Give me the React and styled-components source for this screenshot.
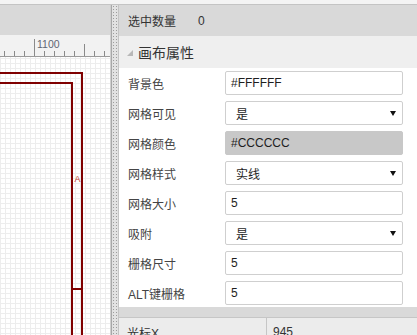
import React from "react";
import styled, { createGlobalStyle } from "styled-components";

const Global = createGlobalStyle`
  html, body { margin: 0; padding: 0; background: #fff; }
  body { font-family: "Liberation Sans", "Noto Sans CJK SC", sans-serif; }
  * { box-sizing: border-box; }
`;

const Page = styled.div`
  width: 417px;
  height: 335px;
  overflow: hidden;
  display: flex;
  flex-direction: column;
  background: #f4f4f4;
`;

const TopStrip = styled.div`
  height: 5px;
  flex: none;
  background: #f4f4f4;
  border-bottom: 1px solid #c4c4c4;
`;

const Main = styled.div`
  flex: 1;
  display: flex;
  min-height: 0;
`;

const Canvas = styled.div`
  width: 111px;
  flex: none;
  display: flex;
  flex-direction: column;
  border-right: 1px solid #cfcfcf;
`;

const CanvasBar = styled.div`
  height: 30px;
  flex: none;
  background: #d9d9d9;
`;

const Ruler = styled.div`
  height: 22px;
  flex: none;
  background: #f2f2f2;
  border-bottom: 1px solid #9a9a9a;
  svg { display: block; }
`;

const Grid = styled.div`
  flex: 1;
  background-color: #fff;
  background-image: linear-gradient(#ededed 1px, transparent 1px),
    linear-gradient(90deg, #ededed 1px, transparent 1px);
  background-size: 5px 5px;
  background-position: 0 1px;
  svg { display: block; }
`;

const Splitter = styled.div`
  width: 8px;
  flex: none;
  border-left: 1px solid #a8a8a8;
  border-right: 1px solid #c4c4c4;
  background-color: #e2e2e2;
  background-image: radial-gradient(circle at 1.5px 1.5px, #9c9c9c 0.8px, transparent 1px);
  background-size: 3px 3px;
`;

const Panel = styled.div`
  flex: 1;
  display: flex;
  flex-direction: column;
  background: #fff;
  color: #333;
  font-size: 12px;
`;

const CountRow = styled.div`
  height: 31px;
  flex: none;
  display: flex;
  align-items: center;
  padding-left: 9px;
  background: #d9d9d9;
`;

const CountLabel = styled.span`
  width: 70px;
`;

const SectionHeader = styled.div`
  height: 32px;
  flex: none;
  display: flex;
  align-items: center;
  gap: 5px;
  padding-left: 8px;
  background: #efefef;
  font-size: 14px;
  color: #333;
`;

const Corner = styled.span`
  width: 0;
  height: 0;
  margin-top: 2px;
  border-style: solid;
  border-width: 0 0 6px 6px;
  border-color: transparent transparent #b8b8b8 transparent;
`;

const Form = styled.div`
  flex: none;
  display: flex;
  flex-direction: column;
  gap: 6px;
  padding: 3px 14px 2px 9px;
`;

const Row = styled.div`
  height: 24px;
  display: flex;
  align-items: center;
`;

const Label = styled.span`
  width: 97px;
  color: #444;
`;

const Field = styled.div`
  width: 178px;
  height: 24px;
  display: flex;
  align-items: center;
  justify-content: space-between;
  padding: 0 6px 0 ${(p) => (p.$select ? 10 : 5)}px;
  border: 1px solid ${(p) => (p.$fill ? p.$fill : "#cfcfcf")};
  border-radius: 2px;
  background: ${(p) => p.$fill || "#fff"};
  color: #1e1e1e;
  font-size: 12px;
`;

const Arrow = styled.span`
  width: 0;
  height: 0;
  border-style: solid;
  border-width: 5px 3px 0 3px;
  border-color: #111 transparent transparent transparent;
`;

const Gap = styled.div`
  height: 10px;
  flex: none;
  background: #d9d9d9;
`;

const InfoRow = styled.div`
  flex: 1;
  display: flex;
  border-top: 1px solid #c6c6c6;
  background: #ececec;
`;

const InfoCell = styled.div`
  height: 28px;
  display: flex;
  align-items: center;
  padding-left: ${(p) => (p.$first ? 8 : 6)}px;
  width: ${(p) => (p.$first ? "148px" : "auto")};
  flex: ${(p) => (p.$first ? "none" : 1)};
  border-right: ${(p) => (p.$first ? "1px solid #c6c6c6" : "none")};
  color: #333;
`;

const rows = [
  { label: "背景色", value: "#FFFFFF" },
  { label: "网格可见", value: "是", select: true },
  { label: "网格颜色", value: "#CCCCCC", fill: "#c8c8c8" },
  { label: "网格样式", value: "实线", select: true },
  { label: "网格大小", value: "5" },
  { label: "吸附", value: "是", select: true },
  { label: "栅格尺寸", value: "5" },
  { label: "ALT键栅格", value: "5" },
];

function RulerDrawing() {
  const ticks = [4, 14, 24, 34, 44, 54, 64, 74, 84, 94, 104];
  return (
    <svg width="110" height="21" viewBox="0 0 110 21">
      {ticks.map((x) => {
        const top = x === 34 ? 4 : x === 84 ? 9 : 16;
        return (
          <line key={x} x1={x + 0.5} x2={x + 0.5} y1={top} y2={21} stroke="#8a8a8a" strokeWidth="1" />
        );
      })}
      <text x="37" y="12.5" fontSize="10.5" fill="#5f6673" fontFamily="Liberation Sans, sans-serif">
        1100
      </text>
    </svg>
  );
}

function CanvasDrawing() {
  const red = "#7f0000";
  return (
    <svg width="110" height="278" viewBox="0 0 110 278" shapeRendering="crispEdges">
      <polyline points="0,16 82,16 82,278" fill="none" stroke={red} strokeWidth="2" />
      <polyline points="0,26 72,26 72,278" fill="none" stroke={red} strokeWidth="2" />
      <line x1="72" x2="82" y1="232" y2="232" stroke={red} strokeWidth="2" />
      <text x="77.5" y="124.5" fontSize="9" fill="#c0392b" textAnchor="middle" fontFamily="Liberation Sans, sans-serif" shapeRendering="auto">
        A
      </text>
    </svg>
  );
}

export default function App() {
  return (
    <>
      <Global />
      <Page>
        <TopStrip />
        <Main>
          <Canvas>
            <CanvasBar />
            <Ruler>
              <RulerDrawing />
            </Ruler>
            <Grid>
              <CanvasDrawing />
            </Grid>
          </Canvas>
          <Splitter />
          <Panel>
            <CountRow>
              <CountLabel>选中数量</CountLabel>
              <span>0</span>
            </CountRow>
            <SectionHeader>
              <Corner />
              <span>画布属性</span>
            </SectionHeader>
            <Form>
              {rows.map((r) => (
                <Row key={r.label}>
                  <Label>{r.label}</Label>
                  <Field $select={r.select} $fill={r.fill}>
                    <span>{r.value}</span>
                    {r.select && <Arrow />}
                  </Field>
                </Row>
              ))}
            </Form>
            <Gap />
            <InfoRow>
              <InfoCell $first>光标X</InfoCell>
              <InfoCell>945</InfoCell>
            </InfoRow>
          </Panel>
        </Main>
      </Page>
    </>
  );
}
